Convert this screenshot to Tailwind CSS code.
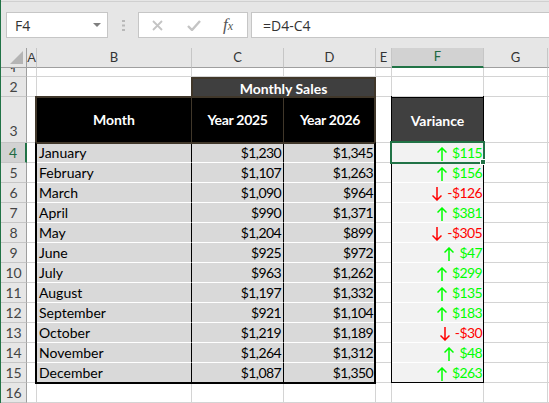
<!DOCTYPE html>
<html lang="en">
<head>
  <meta charset="UTF-8">
  <title>Variance</title>
  <script src="https://cdn.jsdelivr.net/npm/@tailwindcss/browser@4"></script>
</head>
<body class="w-[549px] h-[403px] overflow-hidden bg-white font-['Lato','Liberation_Sans',sans-serif] text-[14px] text-black">
  <div class="h-full border-l border-[#217346] flex flex-col">
    <!-- formula bar -->
    <div class="h-[48px] bg-[#e6e6e6] flex flex-col font-['Open_Sans',sans-serif] text-[14px] text-[#333]">
      <div class="h-[2px] border-b border-[#d0d0d0]"></div>
      <div class="flex items-start pt-[10px] pl-[5px] gap-[3px]">
        <div class="w-[102px] h-[26px] bg-white border border-[#c6c6c6] flex items-center justify-between pl-2 pr-[6px]">
          <span>F4</span>
          <svg width="8" height="4" viewBox="0 0 8 4"><path d="M0 0h8L4 4z" fill="#7f7f7f"/></svg>
        </div>
        <div class="w-[24px] h-[26px] flex items-center justify-center">
          <svg width="3" height="11" viewBox="0 0 3 11"><path d="M0 0h3v2H0zM0 4.500h3v2H0zM0 9h3v2H0z" fill="#b8b8b8"/></svg>
        </div>
        <div class="w-[110px] h-[26px] bg-white border border-[#c6c6c6] flex items-center pl-[13px]">
          <svg width="11" height="11" viewBox="0 0 11 11"><path d="M1 1l9 9M10 1l-9 9" stroke="#c4c4c4" stroke-width="1.800" fill="none"/></svg>
          <svg class="ml-[24px]" width="14" height="11" viewBox="0 0 14 11"><path d="M1 6l4 4 8-9" stroke="#c4c4c4" stroke-width="2.400" fill="none"/></svg>
          <span class="ml-[22px] font-['Liberation_Serif',serif] italic text-[17px] text-[#555]">f<span class="text-[12px]">x</span></span>
        </div>
        <div class="flex-1 h-[26px] bg-white border-y border-l border-[#c6c6c6] flex items-center pl-[11px]">=D4-C4</div>
      </div>
    </div>

    <!-- sheet -->
    <div class="relative">
      <div id="sheet" class="grid grid-cols-[26px_10px_155px_92px_92px_16px_92px_64px_1fr] grid-rows-[20px_9px_20px_46px_repeat(13,20px)]">
        <!-- column headers -->
        <div class="bg-[#e6e6e6] border-r border-b border-[#9f9f9f] flex items-center justify-end pr-[3px]">
          <svg width="13" height="13" viewBox="0 0 13 13"><path d="M13 0v13H0z" fill="#b4b4b4"/></svg>
        </div>
        <div class="bg-[#e6e6e6] border-r border-b border-r-[#c6c6c6] border-b-[#9f9f9f] flex items-center justify-center text-[#333] font-['Liberation_Sans',sans-serif] text-[13px]">A</div>
        <div class="bg-[#e6e6e6] border-r border-b border-r-[#c6c6c6] border-b-[#9f9f9f] flex items-center justify-center text-[#333] text-[13px]">B</div>
        <div class="bg-[#e6e6e6] border-r border-b border-r-[#c6c6c6] border-b-[#9f9f9f] flex items-center justify-center text-[#333] text-[13px]">C</div>
        <div class="bg-[#e6e6e6] border-r border-b border-r-[#c6c6c6] border-b-[#9f9f9f] flex items-center justify-center text-[#333] text-[13px]">D</div>
        <div class="bg-[#e6e6e6] border-r border-b border-r-[#c6c6c6] border-b-[#9f9f9f] flex items-center justify-center text-[#333] text-[13px]">E</div>
        <div class="bg-[#d2d2d2] border-r border-b-2 border-r-[#c6c6c6] border-b-[#217346] flex items-center justify-center text-[#1f6a42] text-[13px]">F</div>
        <div class="bg-[#e6e6e6] border-r border-b border-r-[#c6c6c6] border-b-[#9f9f9f] flex items-center justify-center text-[#333] text-[13px]">G</div>
        <div class="bg-[#e6e6e6] border-b border-[#9f9f9f]"></div>

        <!-- row 1 -->
        <div class="bg-[#e6e6e6] border-r border-b border-r-[#9f9f9f] border-b-[#c6c6c6] text-center text-[#444]"><div class="h-[4px] overflow-hidden leading-[5px]">1</div></div>
        <div class="border-r border-b border-[#d4d4d4]"></div>
        <div class="border-r border-b border-[#d4d4d4]"></div>
        <div class="border-r border-b border-[#d4d4d4]"></div>
        <div class="border-r border-b border-[#d4d4d4]"></div>
        <div class="border-r border-b border-[#d4d4d4]"></div>
        <div class="border-r border-b border-[#d4d4d4]"></div>
        <div class="border-r border-b border-[#d4d4d4]"></div>
        <div class="border-b border-[#d4d4d4]"></div>

        <!-- row 2 -->
        <div class="bg-[#e6e6e6] border-r border-b border-r-[#9f9f9f] border-b-[#c6c6c6] flex items-center justify-center text-[#444]">2</div>
        <div class="border-r border-b border-[#d4d4d4]"></div>
        <div class="border-r border-[#d4d4d4]"></div>
        <div class="col-span-2 -ml-px bg-[#3f3f3f] border-2 border-b-0 border-[#40372a] flex items-center justify-center text-white font-bold">Monthly Sales</div>
        <div class="border-r border-b border-[#d4d4d4]"></div>
        <div class="border-r border-b border-[#d4d4d4]"></div>
        <div class="border-r border-b border-[#d4d4d4]"></div>
        <div class="border-b border-[#d4d4d4]"></div>

        <!-- row 3 -->
        <div class="bg-[#e6e6e6] border-r border-b border-r-[#9f9f9f] border-b-[#c6c6c6] flex items-end justify-center text-[#444] pb-px">3</div>
        <div class="border-r border-b border-[#d4d4d4]"></div>
        <div class="bg-black border-r border-b border-[#40372a] flex items-center justify-center text-white font-bold">Month</div>
        <div class="bg-black border-r border-b border-[#40372a] flex items-center justify-center text-white font-bold tracking-[-0.3px]">Year 2025</div>
        <div class="bg-black border-b border-[#40372a] flex items-center justify-center text-white font-bold tracking-[-0.3px]">Year 2026</div>
        <div class="border-r border-b border-[#d4d4d4]"></div>
        <div class="bg-[#404040] border-r border-y border-black flex items-center justify-center text-white font-bold">Variance</div>
        <div class="border-r border-b border-[#d4d4d4]"></div>
        <div class="border-b border-[#d4d4d4]"></div>
      </div>

      <!-- table outlines -->
      <div class="absolute left-[34px] top-[48px] w-[341px] h-[48px] border-2 border-[#40372a] pointer-events-none"></div>
      <div class="absolute left-[34px] top-[94px] w-[341px] h-[242px] border-2 border-black border-t-[#40372a] pointer-events-none"></div>
      <div class="absolute left-[390px] top-[48px] w-[93px] h-[287px] border-x border-b border-black pointer-events-none"></div>
      <!-- selected cell -->
      <div class="absolute left-[389px] top-[93px] w-[95px] h-[23px] border-2 border-[#217346] pointer-events-none">
        <div class="absolute -right-[3px] -bottom-[3px] w-[6px] h-[6px] bg-[#217346] border border-white"></div>
      </div>
    </div>
  </div>

  <script>
    const rows = [
      ['January', '$1,230', '$1,345', 115], ['February', '$1,107', '$1,263', 156],
      ['March', '$1,090', '$964', -126], ['April', '$990', '$1,371', 381],
      ['May', '$1,204', '$899', -305], ['June', '$925', '$972', 47],
      ['July', '$963', '$1,262', 299], ['August', '$1,197', '$1,332', 135],
      ['September', '$921', '$1,104', 183], ['October', '$1,219', '$1,189', -30],
      ['November', '$1,264', '$1,312', 48], ['December', '$1,087', '$1,350', 263],
    ];
    const blank = '<div class="border-r border-b border-[#d4d4d4]"></div>';
    const last = '<div class="border-b border-[#d4d4d4]"></div>';
    const up = '<svg class="mt-[2px]" width="10" height="14" viewBox="0 0 10 14"><path d="M5 14V1M.5 5.500L5 1l4.500 4.500" stroke="#00ff00" stroke-width="1.500" fill="none"/></svg>';
    const down = '<svg class="mt-[2px]" width="10" height="14" viewBox="0 0 10 14"><path d="M5 0v13M.5 8.500L5 13l4.500-4.500" stroke="#ff0000" stroke-width="1.500" fill="none"/></svg>';
    let html = '';
    rows.forEach((r, i) => {
      const n = i + 4;
      const pos = r[3] >= 0;
      html += i === 0
        ? `<div class="bg-[#d2d2d2] border-r-2 border-b border-r-[#217346] border-b-[#c6c6c6] flex items-center justify-center text-[#1f6a42]">${n}</div>`
        : `<div class="bg-[#e6e6e6] border-r border-b border-r-[#9f9f9f] border-b-[#c6c6c6] flex items-center justify-center text-[#444]">${n}</div>`;
      html += blank;
      html += `<div class="bg-[#d9d9d9] border-r border-r-black border-b border-b-white flex items-center pl-[2px]">${r[0]}</div>`;
      html += `<div class="bg-[#d9d9d9] border-r border-r-black border-b border-b-white flex items-center justify-end pr-[2px] tracking-[-0.6px]">${r[1]}</div>`;
      html += `<div class="bg-[#d9d9d9] border-b border-b-white flex items-center justify-end pr-[3px] tracking-[-0.6px]">${r[2]}</div>`;
      html += blank;
      html += `<div class="bg-[#f2f2f2] border-b border-b-white flex items-center justify-end gap-[5px] pr-[2px] tracking-[-0.6px] ${pos ? 'text-[#00ff00]' : 'text-[#ff0000]'}">${pos ? up : down}<span>${pos ? '' : '-'}$${Math.abs(r[3])}</span></div>`;
      html += blank + last;
    });
    html += `<div class="bg-[#e6e6e6] border-r border-b border-r-[#9f9f9f] border-b-[#c6c6c6] flex items-center justify-center text-[#444]">16</div>`;
    html += blank.repeat(7) + last;
    document.getElementById('sheet').insertAdjacentHTML('beforeend', html);
  </script>
</body>
</html>
